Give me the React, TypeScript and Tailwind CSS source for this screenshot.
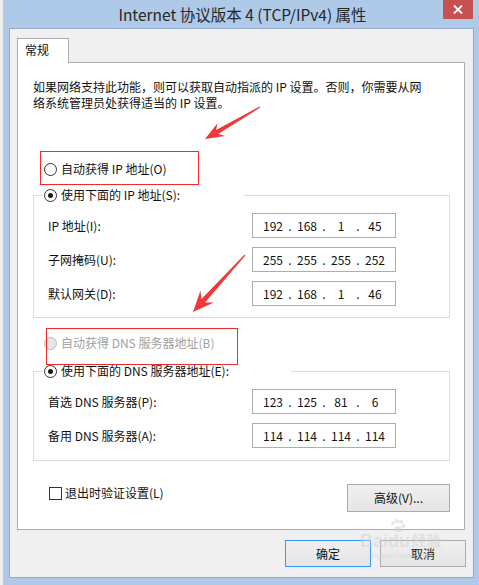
import React from "react";

const FONT = "font-['Noto_Sans_CJK_SC','Noto_Sans',sans-serif]";

function Radio({ checked, disabled }: { checked?: boolean; disabled?: boolean }) {
  return (
    <span
      className={`w-[13px] h-[13px] rounded-full border flex items-center justify-center shrink-0 ${
        disabled ? "border-[#bcbcbc] bg-[#e6e6e6]" : "border-[#333333] bg-white"
      }`}
    >
      {checked && <span className="w-[5px] h-[5px] rounded-full bg-[#1a1a1a]" />}
    </span>
  );
}

function IpBox({ parts }: { parts: string[] }) {
  return (
    <div className="w-[144px] h-[25px] border border-[#abadb3] bg-white flex items-center pl-[7px] text-[12px] leading-[16px] text-[#111]">
      {parts.map((p, i) => (
        <React.Fragment key={i}>
          <span className="w-[26px] text-center">{p}</span>
          {i < 3 && <span className="w-[8px] text-center">.</span>}
        </React.Fragment>
      ))}
    </div>
  );
}

function Row({ label, parts }: { label: string; parts: string[] }) {
  return (
    <div className="flex items-center h-[25px]">
      <span className="w-[204px] text-[12px] leading-[16px] text-[#111]">{label}</span>
      <IpBox parts={parts} />
    </div>
  );
}

function GroupHeader({ label, width }: { label: string; width: string }) {
  return (
    <div className="flex h-[16px]">
      <div className="w-[10px] h-[8px] self-end border-t border-l border-[#dcdcdc]" />
      <div className={`flex items-center gap-[4px] ${width}`}>
        <span className="ml-[1px]">
          <Radio checked />
        </span>
        <span className="text-[12px] leading-[16px] text-[#111] whitespace-nowrap">{label}</span>
      </div>
      <div className="flex-1 h-[8px] self-end border-t border-r border-[#dcdcdc]" />
    </div>
  );
}

function Btn({ children, w, h, focused }: { children: React.ReactNode; w: string; h: string; focused?: boolean }) {
  return (
    <div
      className={`${w} ${h} border ${
        focused ? "border-[#3399ff]" : "border-[#acacac]"
      } bg-linear-to-b from-[#f0f0f0] to-[#e5e5e5] flex items-center justify-center text-[12px] leading-[16px] text-[#111]`}
    >
      {children}
    </div>
  );
}

export default function App() {
  return (
    <div className={`w-[479px] h-[585px] overflow-hidden relative flex bg-[#ececec] ${FONT}`}>
      <div className="w-[3px] shrink-0 bg-[#eeeeee]" />
      <div className="w-[476px] shrink-0 bg-[#aecae8] flex flex-col">
        {/* title bar */}
        <div className="relative h-[28px] flex items-center justify-center">
          <span className="text-[15.5px] leading-[20px] text-[#262626] pl-[3px]">
            Internet 协议版本 4 (TCP/IPv4) 属性
          </span>
          <div className="absolute left-[440px] top-0 w-[30px] h-[19px] bg-[#c75050] flex items-center justify-center">
            <svg width="10" height="9" viewBox="0 0 10 9">
              <path d="M1 0.5 L9 8.5 M9 0.5 L1 8.5" stroke="white" strokeWidth="1.8" />
            </svg>
          </div>
        </div>
        {/* content */}
        <div className="ml-[6px] w-[465px] h-[550px] border border-[#93abc9] bg-[#f0f0f0] pl-[7px] pt-[9px] flex flex-col">
          <div className="relative z-10 w-[52px] h-[25px] -mb-[1px] border-t border-l border-r border-[#adadad] bg-white pl-[7px] pt-[3px] text-[12px] leading-[16px] text-[#111]">
            常规
          </div>
          <div className="w-[448px] h-[468px] border border-[#adadad] bg-white pl-[15px] pr-[14px] pt-[16px] flex flex-col">
            <div className="text-[12px] leading-[16px] text-[#111] whitespace-nowrap">
              <div>如果网络支持此功能，则可以获取自动指派的 IP 设置。否则，你需要从网</div>
              <div>络系统管理员处获得适当的 IP 设置。</div>
            </div>

            <div className="mt-[50px] h-[16px] flex items-center gap-[4px] pl-[11px]">
              <Radio />
              <span className="text-[12px] leading-[16px] text-[#111]">自动获得 IP 地址(O)</span>
            </div>

            <div className="mt-[10px]">
              <GroupHeader label="使用下面的 IP 地址(S):" width="w-[201px]" />
              <div className="border-l border-r border-b border-[#dcdcdc] pl-[14px] pt-[10px] pb-[11px] flex flex-col gap-[9px]">
                <Row label="IP 地址(I):" parts={["192", "168", "1", "45"]} />
                <Row label="子网掩码(U):" parts={["255", "255", "255", "252"]} />
                <Row label="默认网关(D):" parts={["192", "168", "1", "46"]} />
              </div>
            </div>

            <div className="mt-[17px] h-[16px] flex items-center gap-[4px] pl-[11px]">
              <Radio disabled />
              <span className="text-[12px] leading-[16px] text-[#a0a0a0]">自动获得 DNS 服务器地址(B)</span>
            </div>

            <div className="mt-[12px]">
              <GroupHeader label="使用下面的 DNS 服务器地址(E):" width="w-[248px]" />
              <div className="border-l border-r border-b border-[#dcdcdc] pl-[14px] pt-[10px] pb-[12px] flex flex-col gap-[9px]">
                <Row label="首选 DNS 服务器(P):" parts={["123", "125", "81", "6"]} />
                <Row label="备用 DNS 服务器(A):" parts={["114", "114", "114", "114"]} />
              </div>
            </div>

            <div className="mt-[23px] flex items-start justify-between">
              <div className="mt-[1px] h-[16px] pl-[16px] flex items-center gap-[3px]">
                <span className="w-[13px] h-[13px] border border-[#333333] bg-white" />
                <span className="text-[12px] leading-[16px] text-[#111]">退出时验证设置(L)</span>
              </div>
              <Btn w="w-[103px]" h="h-[28px]">高级(V)...</Btn>
            </div>
          </div>

          <div className="mt-[10px] flex justify-end gap-[9px] pr-[7px]">
            <Btn w="w-[86px]" h="h-[27px]" focused>
              确定
            </Btn>
            <Btn w="w-[86px]" h="h-[27px]">
              取消
            </Btn>
          </div>
        </div>
      </div>

      {/* annotation boxes */}
      <div className="absolute left-[40px] top-[151px] w-[159px] h-[34px] border border-[#ee2a2a]" />
      <div className="absolute left-[46px] top-[328px] w-[192px] h-[37px] border border-[#ee2a2a]" />

      {/* arrows */}
      <svg className="absolute left-0 top-0 pointer-events-none" width="479" height="585" viewBox="0 0 479 585">
        <polygon
          fill="#f03838"
          points="205,139 225.2,135.9 218.2,133.9 260.3,107.5 259.7,106.5 216,130.1 217.7,123"
        />
        <polygon
          fill="#f03838"
          points="193,312 213.8,302.5 205,302.6 245.4,255.4 244.6,254.6 201.3,299.2 200.5,290.4"
        />
      </svg>

      {/* watermark */}
      <div className="absolute left-[360px] top-[531px] pointer-events-none flex flex-col items-center opacity-50">
        <div className="flex items-end font-['Liberation_Sans',sans-serif] font-bold text-[18px] leading-[20px] text-[#d0d0d0]">
          <span>Bai</span>
          <span className="relative">
            du
            <svg className="absolute left-[2px] -top-[12px]" width="16" height="13" viewBox="0 0 16 13">
              <circle cx="3" cy="4" r="2" fill="#d0d0d0" />
              <circle cx="7" cy="2" r="2" fill="#d0d0d0" />
              <circle cx="11" cy="3" r="2" fill="#d0d0d0" />
              <circle cx="13.5" cy="7" r="2" fill="#d0d0d0" />
              <ellipse cx="8" cy="10" rx="4" ry="3" fill="#d0d0d0" />
            </svg>
          </span>
          <span className="text-[15px] ml-[2px]">经验</span>
        </div>
        <div className="text-[8px] leading-[10px] text-[#d0d0d0] font-['Liberation_Sans',sans-serif]">jingyan.baidu.com</div>
      </div>
    </div>
  );
}
